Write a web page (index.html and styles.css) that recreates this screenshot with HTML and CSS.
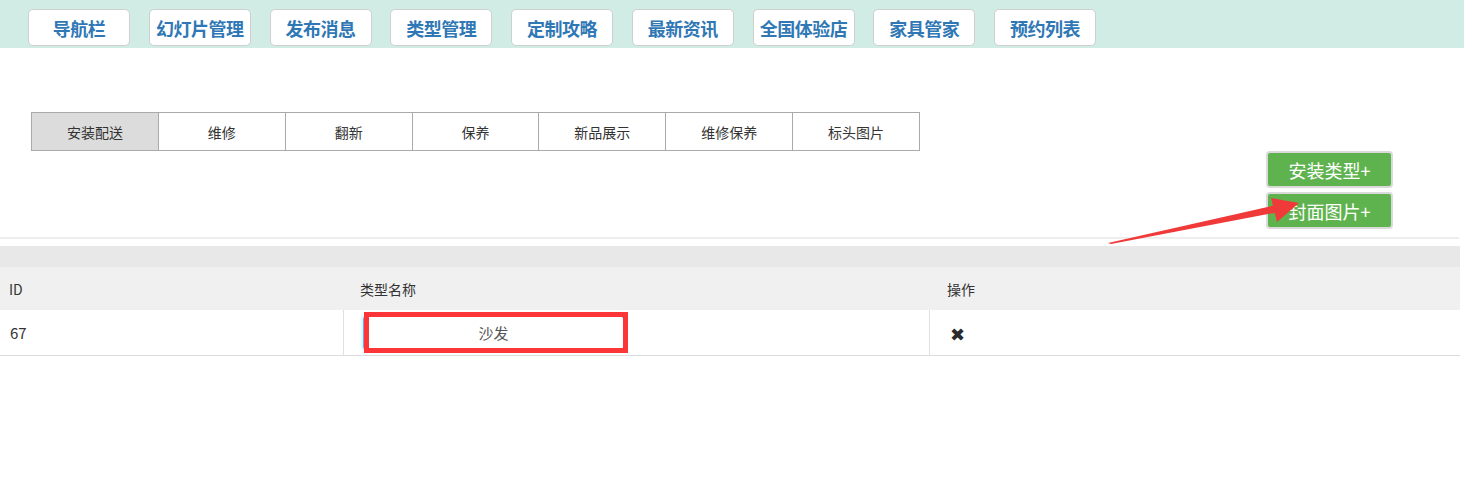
FILE: index.html
```html
<!DOCTYPE html>
<html lang="zh">
<head>
<meta charset="utf-8">
<title>类型管理</title>
<link rel="stylesheet" href="styles.css">
</head>
<body>
<div class="page">
  <nav class="topnav">
    <a class="nav-btn">导航栏</a>
    <a class="nav-btn">幻灯片管理</a>
    <a class="nav-btn">发布消息</a>
    <a class="nav-btn">类型管理</a>
    <a class="nav-btn">定制攻略</a>
    <a class="nav-btn">最新资讯</a>
    <a class="nav-btn">全国体验店</a>
    <a class="nav-btn">家具管家</a>
    <a class="nav-btn">预约列表</a>
  </nav>

  <div class="tabs">
    <div class="tab active">安装配送</div>
    <div class="tab">维修</div>
    <div class="tab">翻新</div>
    <div class="tab">保养</div>
    <div class="tab">新品展示</div>
    <div class="tab">维修保养</div>
    <div class="tab">标头图片</div>
  </div>

  <div class="actions">
    <button class="green-btn">安装类型+</button>
    <button class="green-btn">封面图片+</button>
  </div>

  <div class="divider"></div>

  <div class="table">
    <div class="band"></div>
    <div class="row head">
      <div class="cell c1">ID</div>
      <div class="cell c2">类型名称</div>
      <div class="cell c3">操作</div>
    </div>
    <div class="row body">
      <div class="cell c1">67</div>
      <div class="cell c2 bl">
        <div class="input-wrap">
          <input class="name-input" type="text" value="沙发">
          <div class="mark"></div>
        </div>
      </div>
      <div class="cell c3 bl"><span class="del">✖</span></div>
    </div>
  </div>

  <svg class="arrow" width="1464" height="479" viewBox="0 0 1464 479">
    <polygon points="1108,243 1276,205 1279,212 1111,244" fill="#f03a3a"/>
    <polygon points="1271,198 1299,203 1277,222" fill="#f03a3a"/>
  </svg>
</div>
</body>
</html>
```

FILE: styles.css
```css
* { box-sizing: border-box; }
html, body { margin: 0; padding: 0; background: #fff; }
body {
  font-family: "Noto Sans CJK SC", "Noto Sans", "Liberation Sans", sans-serif;
  color: #333;
  font-size: 14px;
}
.page { position: relative; width: 1464px; height: 479px; overflow: hidden; }

.topnav {
  height: 48px;
  background: #d0ece4;
  display: flex;
  gap: 18.75px;
  padding: 9px 0 0 28px;
}
.nav-btn {
  width: 102px;
  height: 37px;
  background: #fff;
  border: 1px solid #cfcfcf;
  border-radius: 5px;
  display: flex;
  align-items: center;
  justify-content: center;
  font-size: 18px;
  font-weight: bold;
  color: #2f78b5;
  letter-spacing: -0.5px;
}

.tabs {
  display: flex;
  margin: 64px 0 0 31px;
  width: 889px;
  border: 1px solid #aaa;
}
.tab {
  flex: 1;
  height: 37px;
  display: flex;
  align-items: center;
  justify-content: center;
  font-size: 14px;
  color: #333;
  border-left: 1px solid #aaa;
}
.tab:first-child { border-left: none; }
.tab.active { background: #dcdcdc; }

.actions {
  display: flex;
  flex-direction: column;
  align-items: flex-end;
  gap: 4px;
  padding-right: 71px;
}
.green-btn {
  width: 127px;
  height: 37px;
  background: #5fb34f;
  border: 2px solid #dadada;
  border-radius: 4px;
  color: #fff;
  font-family: inherit;
  font-size: 18px;
  padding: 0;
}

.divider {
  width: 1459px;
  height: 2px;
  background: #eeeeee;
  margin-top: 8px;
}

.table { width: 1460px; margin-top: 7px; }
.band { height: 21px; background: #e8e8e8; }
.row { display: flex; }
.row.head { height: 43px; background: #f0f0f0; }
.row.body { height: 46px; border-bottom: 1px solid #dcdcdc; }
.cell { display: flex; align-items: center; font-size: 14px; color: #333; }
.c1 { width: 343px; padding-left: 9px; }
.c2 { width: 586px; padding-left: 17px; }
.c3 { flex: 1; padding-left: 18px; }
.row.body .c1 { padding-left: 10px; font-size: 15px; }
.bl { border-left: 1px solid #e0e0e0; }
.row.body .c2 { padding-left: 19px; }
.row.body .c3 { padding-left: 20px; }

.input-wrap { position: relative; }
.name-input {
  width: 261px;
  height: 34px;
  border: 1px solid #66afe9;
  border-radius: 3px;
  box-shadow: 0 0 4px rgba(102,175,233,0.5);
  text-align: center;
  font-family: inherit;
  font-size: 15px;
  color: #555;
  outline: none;
  display: block;
}
.mark {
  position: absolute;
  left: 1px;
  top: -4px;
  width: 264px;
  height: 41px;
  border: 5px solid #fb3538;
}
.del { font-size: 18px; color: #2a2a2a; }

.arrow { position: absolute; left: 0; top: 0; pointer-events: none; }
```
